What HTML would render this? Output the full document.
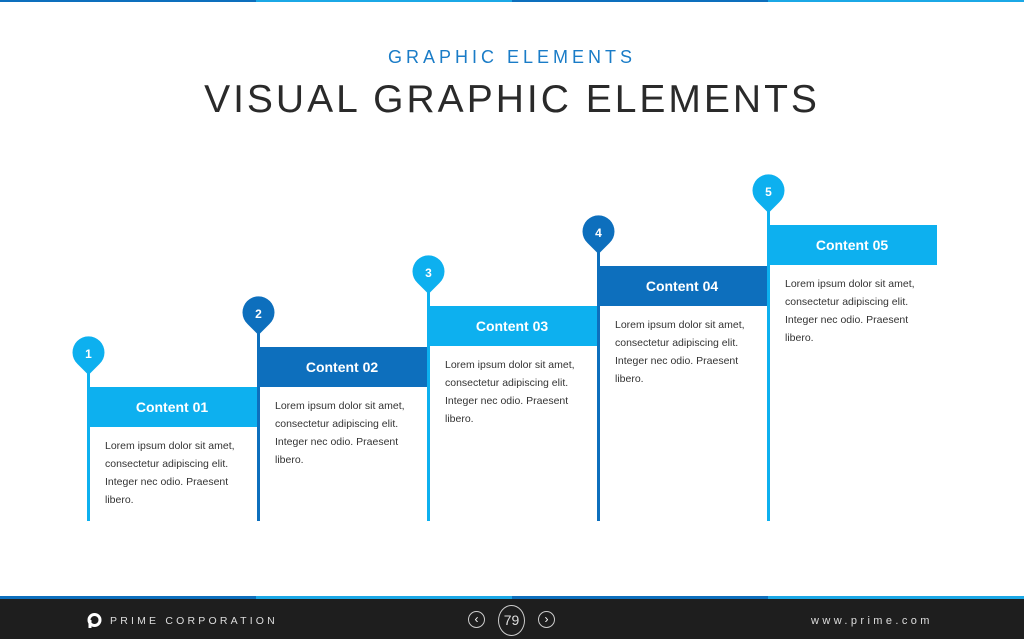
<!DOCTYPE html><html><head><style>
body{margin:0;width:1024px;height:639px;overflow:hidden;background:#fff;font-family:"Liberation Sans",sans-serif;position:relative}
.a{position:absolute}
.t{font-size:12.5px;color:#333;line-height:18px}
.h{color:#fff;font-weight:bold;font-size:14px;text-align:center;line-height:40px}
</style></head><body>
<div class="a" style="left:0;top:0;width:256px;height:2px;background:#0d6fbd"></div>
<div class="a" style="left:256px;top:0;width:256px;height:2px;background:#1ba8e6"></div>
<div class="a" style="left:512px;top:0;width:256px;height:2px;background:#0d6fbd"></div>
<div class="a" style="left:768px;top:0;width:256px;height:2px;background:#1ba8e6"></div>
<div class="a" style="left:0;top:47px;width:1024px;text-align:center;color:#1a7cc7;font-size:18px;letter-spacing:4px">GRAPHIC ELEMENTS</div>
<div class="a" style="left:0;top:78px;width:1024px;text-align:center;color:#2a2a2a;font-size:39px;letter-spacing:3px">VISUAL GRAPHIC ELEMENTS</div>
<svg class="a" style="left:0;top:0" width="1024" height="639"></svg>
<div id="c"></div>
<script>
var cols=['#0db0ef','#0d6fbd','#0db0ef','#0d6fbd','#0db0ef'];
var s='',svg='';
for(var i=0;i<5;i++){var L=87+170*i,T=Math.round(387-40.5*i),c=cols[i],cy=T-34;
svg+='<rect x="'+L+'" y="'+(cy+10)+'" width="3" height="'+(521-cy-10)+'" fill="'+c+'"/>';
svg+='<path d="M'+(L+1.5-11)+' '+(cy+11)+' A16 16 0 1 1 '+(L+1.5+11)+' '+(cy+11)+' L'+(L+1.5)+' '+(cy+22)+' Z" fill="'+c+'"/>';
svg+='<text x="'+(L+1.5)+'" y="'+(cy+5)+'" fill="#fff" font-size="12" font-weight="bold" text-anchor="middle" font-family="Liberation Sans">'+(i+1)+'</text>';
s+='<div class="a h" style="left:'+L+'px;top:'+T+'px;width:170px;height:40px;background:'+c+'">Content 0'+(i+1)+'</div>';
s+='<div class="a t" style="left:'+(L+18)+'px;top:'+(T+50)+'px;width:150px;font-size:10.5px">Lorem ipsum dolor sit amet,<br>consectetur adipiscing elit.<br>Integer nec odio. Praesent<br>libero.</div>';}
document.querySelector('svg').innerHTML=svg;
document.getElementById('c').innerHTML=s;
</script>
<div class="a" style="left:0;top:596px;width:256px;height:3px;background:#0d6fbd"></div>
<div class="a" style="left:256px;top:596px;width:256px;height:3px;background:#1ba8e6"></div>
<div class="a" style="left:512px;top:596px;width:256px;height:3px;background:#0d6fbd"></div>
<div class="a" style="left:768px;top:596px;width:256px;height:3px;background:#1ba8e6"></div>
<div class="a" style="left:0;top:599px;width:1024px;height:40px;background:#1e1e1e"></div>
<svg class="a" style="left:87px;top:613px" width="15" height="16"><circle cx="7.5" cy="7" r="5.5" fill="none" stroke="#fff" stroke-width="3"/><rect x="1.5" y="7" width="3" height="8" fill="#fff"/></svg>
<div class="a" style="left:110px;top:615px;color:#ddd;font-size:10.5px;letter-spacing:3.2px">PRIME CORPORATION</div>
<div class="a" style="left:468px;top:611px;width:17px;height:17px;border:1px solid #ccc;border-radius:50%;color:#fff;font-size:12px;text-align:center;line-height:15px;box-sizing:border-box">‹</div>
<div class="a" style="left:498px;top:605px;width:27px;height:31px;border:1px solid #ccc;border-radius:50%;color:#ddd;font-size:14px;text-align:center;line-height:29px;box-sizing:border-box">79</div>
<div class="a" style="left:538px;top:611px;width:17px;height:17px;border:1px solid #ccc;border-radius:50%;color:#fff;font-size:12px;text-align:center;line-height:15px;box-sizing:border-box">›</div>
<div class="a" style="left:811px;top:615px;color:#ddd;font-size:11px;letter-spacing:3.4px">www.prime.com</div>
</body></html>
